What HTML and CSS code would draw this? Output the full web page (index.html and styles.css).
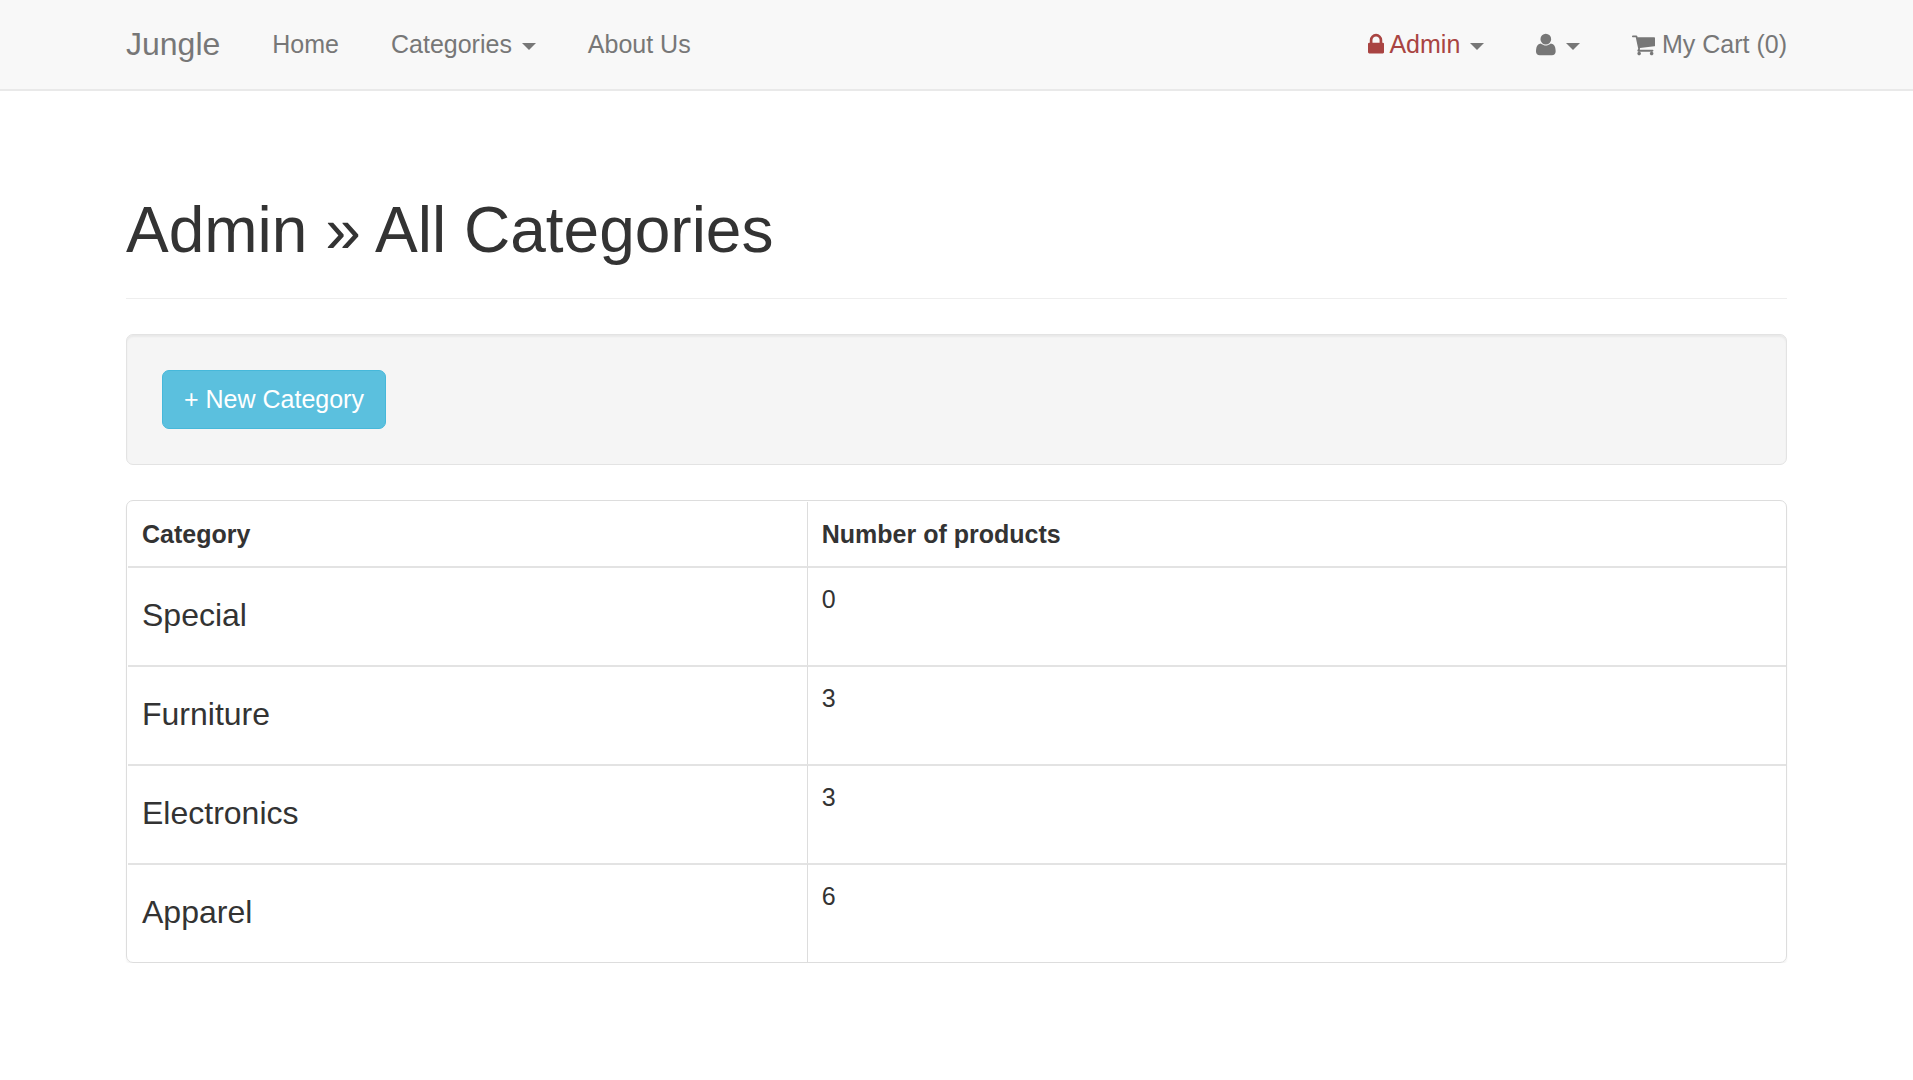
FILE: index.html
```html
<!DOCTYPE html>
<html lang="en">
<head>
  <meta charset="utf-8">
  <meta name="viewport" content="width=device-width, initial-scale=1">
  <title>Jungle</title>
  <link rel="stylesheet" href="styles.css">
</head>
<body>
  <nav class="navbar">
    <div class="container navbar-inner">
      <a class="brand" href="#">Jungle</a>
      <ul class="nav">
        <li><a href="#">Home</a></li>
        <li><a href="#">Categories <span class="caret"></span></a></li>
        <li><a href="#">About Us</a></li>
      </ul>
      <ul class="nav nav-right">
        <li><a href="#"><span class="text-danger"><svg class="icon" viewBox="0 -1536 1152 1792" aria-hidden="true"><path transform="scale(1,-1)" d="M320 768h512v192q0 106-75 181t-181 75t-181-75t-75-181v-192zM1152 672v-576q0-40-28-68t-68-28h-960q-40 0-68 28t-28 68v576q0 40 28 68t68 28h32v192q0 184 132 316t316 132t316-132t132-316v-192h32q40 0 68-28t28-68z"/></svg> Admin</span> <span class="caret"></span></a></li>
        <li><a href="#" aria-label="Account"><svg class="icon" viewBox="0 -1536 1408 1792" aria-hidden="true"><path transform="scale(1,-1)" d="M1408 131q0-120-73-189.5t-194-69.5h-874q-121 0-194 69.5t-73 189.5q0 53 3.5 103.5t14 109t26.5 108.5t43 97.5t62 81t85.5 53.5t111.5 20q9 0 42-21.5t74.5-48t108-48t133.5-21.5t133.5 21.5t108 48t74.5 48t42 21.5q61 0 111.5-20t85.5-53.5t62-81t43-97.5t26.5-108.5t14-109t3.5-103.5zM1088 1024q0-159-112.5-271.5t-271.5-112.5t-271.5 112.5t-112.5 271.5t112.5 271.5t271.5 112.5t271.5-112.5t112.5-271.5z"/></svg> <span class="caret"></span></a></li>
        <li><a href="#"><svg class="icon" viewBox="0 -1536 1664 1792" aria-hidden="true"><path transform="scale(1,-1)" d="M640 0q0-52-38-90t-90-38t-90 38t-38 90t38 90t90 38t90-38t38-90zM1536 0q0-52-38-90t-90-38t-90 38t-38 90t38 90t90 38t90-38t38-90zM1664 1088v-512q0-24-16.5-42.5t-40.5-21.5l-1044-122q13-60 13-70q0-16-24-64h920q26 0 45-19t19-45t-19-45t-45-19h-1024q-26 0-45 19t-19 45q0 11 8 31.5t16 36t21.5 40t15.5 29.5l-177 823h-204q-26 0-45 19t-19 45t19 45t45 19h256q16 0 28.5-6.5t19.5-15.5t13-24.5t8-26t5.5-29.5t4.5-26h1201q26 0 45-19t19-45z"/></svg> My Cart (0)</a></li>
      </ul>
    </div>
  </nav>

  <main class="container">
    <header class="page-header">
      <h1>Admin » All Categories</h1>
    </header>

    <div class="well">
      <button class="btn" type="button">+ New Category</button>
    </div>

    <div class="panel">
      <table class="table">
        <thead>
          <tr><th class="col-name" scope="col">Category</th><th scope="col">Number of products</th></tr>
        </thead>
        <tbody>
          <tr><td><h4>Special</h4></td><td>0</td></tr>
          <tr><td><h4>Furniture</h4></td><td>3</td></tr>
          <tr><td><h4>Electronics</h4></td><td>3</td></tr>
          <tr><td><h4>Apparel</h4></td><td>6</td></tr>
        </tbody>
      </table>
    </div>
  </main>
</body>
</html>
```
FILE: styles.css
```css
* {
  box-sizing: border-box;
}

body {
  margin: 0;
  background: #fff;
  color: #333;
  font: 25px/35px "Liberation Sans", Arial, sans-serif;
}

.container {
  width: calc(100% - 52px);
  max-width: 1661px;
  margin: 0 auto;
}

.navbar {
  background: #f8f8f8;
  border-bottom: 2px solid #e9e9e9;
}

.navbar-inner {
  display: flex;
  align-items: center;
  gap: 52px;
  padding: 27px 0;
}

.navbar a {
  color: #777;
  text-decoration: none;
  white-space: nowrap;
}

.brand {
  font-size: 32px;
}

.nav {
  display: flex;
  gap: 52px;
  margin: 0;
  padding: 0;
  list-style: none;
}

.nav-right {
  margin-left: auto;
}

.icon {
  height: 25px;
  vertical-align: -4px;
  fill: currentColor;
}

.text-danger {
  color: #a94442;
}

.caret {
  display: inline-block;
  margin-left: 3px;
  vertical-align: middle;
  border-top: 7px solid;
  border-right: 7px solid transparent;
  border-left: 7px solid transparent;
}

.page-header {
  margin: 104px 0 35px;
  padding-bottom: 33px;
  border-bottom: 1px solid #eee;
}

h1 {
  margin: 0;
  font-size: 64px;
  line-height: 70px;
  font-weight: 400;
}

.well {
  margin-bottom: 35px;
  padding: 35px;
  background: #f5f5f5;
  border: 1px solid #e3e3e3;
  border-radius: 7px;
  box-shadow: inset 0 2px 2px rgba(0, 0, 0, 0.05);
}

.btn {
  display: block;
  padding: 11px 21px;
  color: #fff;
  background: #5bc0de;
  border: 1px solid #46b8da;
  border-radius: 7px;
  font: inherit;
}

.panel {
  padding: 1px 0 0 1px;
  border: 1px solid #ddd;
  border-radius: 7px;
  box-shadow: 0 2px 2px rgba(0, 0, 0, 0.05);
}

.table {
  width: 100%;
  border-spacing: 0;
}

.col-name {
  width: 41%;
}

.table th,
.table td {
  padding: 14px;
  text-align: left;
  vertical-align: top;
}

.table th {
  padding-top: 15px;
}

.table td {
  border-top: 2px solid #e3e3e3;
}

.table tr > :first-child {
  border-right: 1px solid #ddd;
}

h4 {
  margin: 16px 0 18px;
  font-size: 32px;
  line-height: 35px;
  font-weight: 400;
}
```
